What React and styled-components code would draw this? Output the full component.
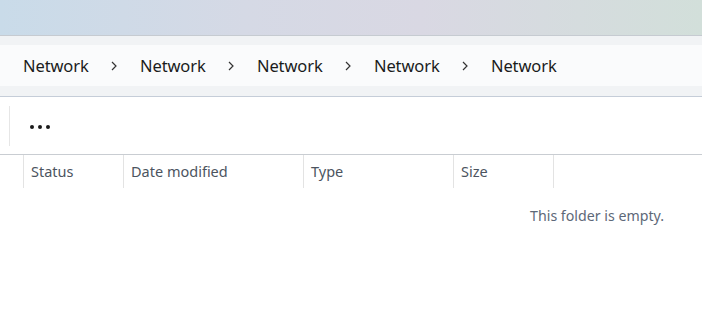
import React from "react";
import styled, { createGlobalStyle } from "styled-components";

const Global = createGlobalStyle`
  html, body {
    margin: 0;
    padding: 0;
    background: #ffffff;
    font-family: "Noto Sans", "Open Sans", sans-serif;
  }
`;

const Window = styled.div`
  width: 702px;
  height: 313px;
  overflow: hidden;
  display: flex;
  flex-direction: column;
  background: #ffffff;
`;

const TitleBand = styled.div`
  height: 35px;
  background: linear-gradient(90deg, #c9dbe9 0%, #d5d9e5 35%, #d9d8e3 60%, #d2dfda 100%);
  border-bottom: 1px solid #c6cbd1;
`;

const AddressArea = styled.div`
  background: #f1f3f5;
  padding: 9px 0 10px;
  border-bottom: 1px solid #c5cdd8;
`;

const Breadcrumbs = styled.nav`
  height: 41px;
  background: #fafbfc;
  display: flex;
  align-items: center;
  padding-left: 23px;
`;

const Crumb = styled.span`
  font-size: 16.5px;
  color: #1b1b1b;
  letter-spacing: -0.1px;
`;

const Chevron = styled.span`
  width: 51.3px;
  display: flex;
  justify-content: center;
  align-items: center;
`;

const Toolbar = styled.div`
  height: 57px;
  display: flex;
  align-items: center;
  border-bottom: 1px solid #c9cdd2;
`;

const Separator = styled.div`
  width: 1px;
  height: 40px;
  background: #e6e6e6;
  margin-left: 9px;
`;

const MoreButton = styled.button`
  border: none;
  background: none;
  padding: 0;
  margin: 2px 0 0 20px;
  display: flex;
  align-items: center;
  gap: 4px;
  height: 20px;
`;

const Dot = styled.span`
  width: 4px;
  height: 4px;
  border-radius: 50%;
  background: #1a1a1a;
`;

const HeaderRow = styled.div`
  display: flex;
  height: 33px;
`;

const Column = styled.div`
  width: ${({ $w }) => $w}px;
  flex: none;
  border-right: 1px solid #e3e3e3;
  box-sizing: border-box;
  display: flex;
  align-items: center;
  padding: 0 0 1px 7px;
  font-size: 14.5px;
  color: #4c5460;
`;

const Empty = styled.div`
  display: flex;
  justify-content: flex-end;
  padding: 18px 38px 0 0;
  font-size: 14.2px;
  color: #5d6878;
`;

const columns = [
  { label: "", w: 24 },
  { label: "Status", w: 100 },
  { label: "Date modified", w: 180 },
  { label: "Type", w: 150 },
  { label: "Size", w: 100 },
];

export default function App() {
  const crumbs = ["Network", "Network", "Network", "Network", "Network"];
  return (
    <Window>
      <Global />
      <TitleBand />
      <AddressArea>
        <Breadcrumbs>
          {crumbs.map((c, i) => (
            <React.Fragment key={i}>
              {i > 0 && (
                <Chevron>
                  <svg width="8" height="12" viewBox="0 0 8 12">
                    <path d="M2 2 L6 6 L2 10" fill="none" stroke="#333" strokeWidth="1.2" />
                  </svg>
                </Chevron>
              )}
              <Crumb>{c}</Crumb>
            </React.Fragment>
          ))}
        </Breadcrumbs>
      </AddressArea>
      <Toolbar>
        <Separator />
        <MoreButton aria-label="More">
          <Dot />
          <Dot />
          <Dot />
        </MoreButton>
      </Toolbar>
      <HeaderRow>
        {columns.map((c, i) => (
          <Column key={i} $w={c.w}>
            {c.label}
          </Column>
        ))}
      </HeaderRow>
      <Empty>This folder is empty.</Empty>
    </Window>
  );
}
